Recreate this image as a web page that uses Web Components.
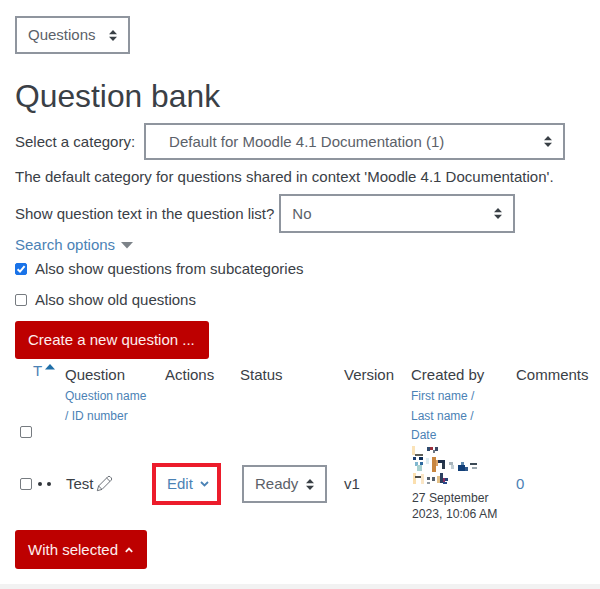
<!DOCTYPE html>
<html><head><meta charset="utf-8">
<style>
html,body{margin:0;padding:0;background:#fff}
body{font:15px/20px "Liberation Sans",Arial,sans-serif;color:#3a4046;width:600px;height:589px;overflow:hidden}
</style></head><body>
<qb-page></qb-page>
<script>
const def=(n,css,html,extra)=>customElements.define(n,class extends HTMLElement{constructor(){super();this.attachShadow({mode:'open'}).innerHTML=`<style>${css}</style>${html}`;if(extra)extra(this)}});
const updown=`<svg width="8" height="11" viewBox="0 0 8 11"><path d="M4 0 8 4.2H0zM4 11 0 6.8H8z" fill="#3a4046"/></svg>`;
def('m-select',`:host{display:inline-flex;box-sizing:border-box;align-items:center;justify-content:space-between;height:var(--h,38px);width:var(--w,auto);border:2px solid #8f959e;background:#fff;color:#5b6169;padding:0 var(--pr,12px) 0 var(--pl,11px);font-size:15px;flex:none}
svg{flex:none;margin-left:var(--gap,0)}`,`<slot></slot>${updown}`);
def('m-btn',`:host{display:inline-flex;box-sizing:border-box;align-items:center;height:var(--h,38px);width:var(--w,auto);background:#bd0000;color:#fdeeee;border-radius:3px;padding:0 13px;font-size:15px;gap:7px}`,`<slot></slot>`);
def('m-check',`:host{display:inline-flex;align-items:center;gap:8px;color:#3a4046}
i{display:block;box-sizing:border-box;width:12px;height:12px;border:1.2px solid #767b80;border-radius:2px;background:#fff;flex:none}
:host([on]) i{background:#1a73e8;border-color:#1a73e8;position:relative}
svg{display:none;width:10px;height:10px;margin:0}
:host([on]) svg{display:block}`,`<i><svg viewBox="0 0 10 10"><path d="M1.6 5.2 4 7.6 8.6 2.2" fill="none" stroke="#fff" stroke-width="2"/></svg></i><slot></slot>`);
def('m-sub',`:host{display:block;font-size:12px;line-height:19.5px;color:#4b82b5}`,`<slot></slot>`);
const pix=[
[0,1,3,9,'#fbe3b8'],[3,9,8,2,'#5f5f58'],[15,2,3,4,'#2f4a6e'],[18,2,3,3,'#9a2f3c'],[21,5,2,3,'#6d7784'],[23,2,3,4,'#3a4a66'],
[1,12,3,3,'#1f3f70'],[7,12,4,3,'#0f2f5a'],[3,17,3,4,'#7fb6d0'],[5,20,5,6,'#a8d0cf'],[8,17,3,3,'#2f6ba0'],[14,13,3,6,'#dcebf0'],
[20,12,4,15,'#c9863f'],[24,15,2,6,'#d9a46a'],[26,15,7,3,'#1f2f4a'],[30,18,3,6,'#2c3a4c'],[37,17,4,3,'#a8b4bb'],[39,20,3,4,'#c2ced4'],
[46,20,7,6,'#123f78'],[49,17,3,3,'#5c87ad'],[53,22,3,4,'#30588a'],[58,18,7,2,'#3c4a56'],[60,22,5,2,'#9aa6ae'],
[1,28,3,11,'#fbdfae'],[3,31,8,2,'#4e4e4a'],[9,29,3,10,'#fae6c6'],[15,32,3,3,'#55606c'],[15,37,3,2,'#8f99a2'],[20,32,3,4,'#55606c'],[25,31,3,7,'#e2c089'],[28,28,3,10,'#2c3f60'],[31,33,2,5,'#8a2f60'],[33,33,3,3,'#263f78'],[31,37,4,2,'#2a4a8a']
];
const blob=`<svg width="65" height="40" viewBox="0 0 65 40" style="filter:blur(.35px)" shape-rendering="crispEdges">${pix.map(p=>`<rect x="${p[0]}" y="${p[1]}" width="${p[2]}" height="${p[3]}" fill="${p[4]}"/>`).join('')}</svg>`;
def('qb-table',`:host{display:grid;grid-template-columns:50px 100px 75px 104px 67px 105px 1fr;grid-template-rows:81px 82px;width:585px}
.h{display:flex;flex-direction:column;align-items:flex-start;padding-top:3px}
.h>span.t{line-height:20px}
.c{display:flex;align-items:center}
.first{position:relative}
.first m-check{margin:auto 0 5px 5px}
.t1{display:flex;align-items:flex-start;padding:0 0 0 18px;margin-top:-2px;color:#4b82b5;line-height:16px;gap:3px}
.dots{display:flex;gap:5px;margin-left:6px}.dots b{width:4px;height:4px;border-radius:50%;background:#30353a}
.edit{box-sizing:border-box;width:69px;height:42px;border:4px solid #ec1c2b;display:flex;align-items:center;gap:7px;padding-left:11px;color:#4b82b5;margin-left:-13px}
.pen{margin-left:2px;margin-top:-2px}`,`
<div class="h first"><div class="t1">T<svg width="10" height="6" viewBox="0 0 10 6" style="margin-top:1px"><path d="M5 0 10 5.5H0z" fill="#1f6fa8"/></svg></div><m-check></m-check></div>
<div class="h"><span class="t">Question</span><m-sub style="margin-top:2px">Question name<br>/ ID number</m-sub></div>
<div class="h"><span class="t">Actions</span></div>
<div class="h"><span class="t">Status</span></div>
<div class="h"><span class="t">Version</span></div>
<div class="h"><span class="t">Created by</span><m-sub style="margin-top:2px">First name /<br>Last name /<br>Date</m-sub></div>
<div class="h"><span class="t">Comments</span></div>
<div class="c"><m-check style="margin-left:5px"></m-check><span class="dots"><b></b><b></b></span></div>
<div class="c" style="padding-left:1px">Test<svg class="pen" width="17" height="17" viewBox="0 0 17 17"><path d="M1.3 15.7 2.6 11 11.8 1.8Q13 .7 14.2 1.8L15.2 2.8Q16.3 4 15.2 5.2L6 14.4ZM2.6 11 6 14.4M10.6 3 14 6.4" fill="none" stroke="#5b6169" stroke-width=".9"/></svg></div>
<div class="c"><div class="edit">Edit<svg width="9" height="6" viewBox="0 0 9 6"><path d="M1 1 4.5 4.5 8 1" fill="none" stroke="#4b82b5" stroke-width="1.8"/></svg></div></div>
<div class="c" style="padding-left:2px"><m-select style="--w:85px;--pl:11px;--pr:11px">Ready</m-select></div>
<div class="c">v1</div>
<div class="c" style="flex-direction:column;align-items:flex-start;justify-content:flex-end;padding:0 0 3px 1px;font-size:12.2px;line-height:16px;color:#3a4046">${blob}<span style="margin-top:5px">27 September<br>2023, 10:06 AM</span></div>
<div class="c" style="color:#4b82b5">0</div>`);
def('qb-page',`:host{display:flex;flex-direction:column;align-items:flex-start;height:589px;padding:16px 0 0 15px;box-sizing:border-box;position:relative}
h1{font:400 31.8px/38px "Liberation Sans",Arial,sans-serif;margin:23px 0 8px;color:#3a4046}
.row{display:flex;align-items:center}
.lbl{margin-right:5px}
.note{margin:7px 0 7px}
.search{margin:1px 0 0;color:#4b82b5;display:flex;align-items:center;gap:6px;height:22px}
m-check{height:20px}
.foot{position:absolute;left:0;right:0;bottom:0;height:5px;background:#f2f2f2}`,`
<m-select style="--w:115px;--pl:11px;--pr:11px">Questions</m-select>
<h1>Question bank</h1>
<div class="row"><span class="lbl" style="margin-right:9px">Select a category:</span><m-select style="--w:421px;--pl:23px;--pr:11px;--h:37px">Default for Moodle 4.1 Documentation (1)</m-select></div>
<div class="note">The default category for questions shared in context 'Moodle 4.1 Documentation'.</div>
<div class="row"><span class="lbl">Show question text in the question list?</span><m-select style="--w:236px;--pl:11px;--pr:11px;--h:39px">No</m-select></div>
<div class="search">Search options <svg width="12" height="7" viewBox="0 0 12 7"><path d="M0 0H12L6 6.5Z" fill="#7d8389"/></svg></div>
<m-check on style="margin-top:3px">Also show questions from subcategories</m-check>
<m-check style="margin-top:11px">Also show old questions</m-check>
<m-btn style="margin-top:11px;--w:194px">Create a new question ...</m-btn>
<qb-table style="margin-top:3px"></qb-table>
<m-btn style="margin-top:5px;--w:132px;--h:39px">With selected <svg width="8" height="6" viewBox="0 0 8 6"><path d="M.8 4.8 4 1.6 7.2 4.8" fill="none" stroke="#fdeeee" stroke-width="1.8"/></svg></m-btn>
<div class="foot"></div>`);
</script></body></html>
